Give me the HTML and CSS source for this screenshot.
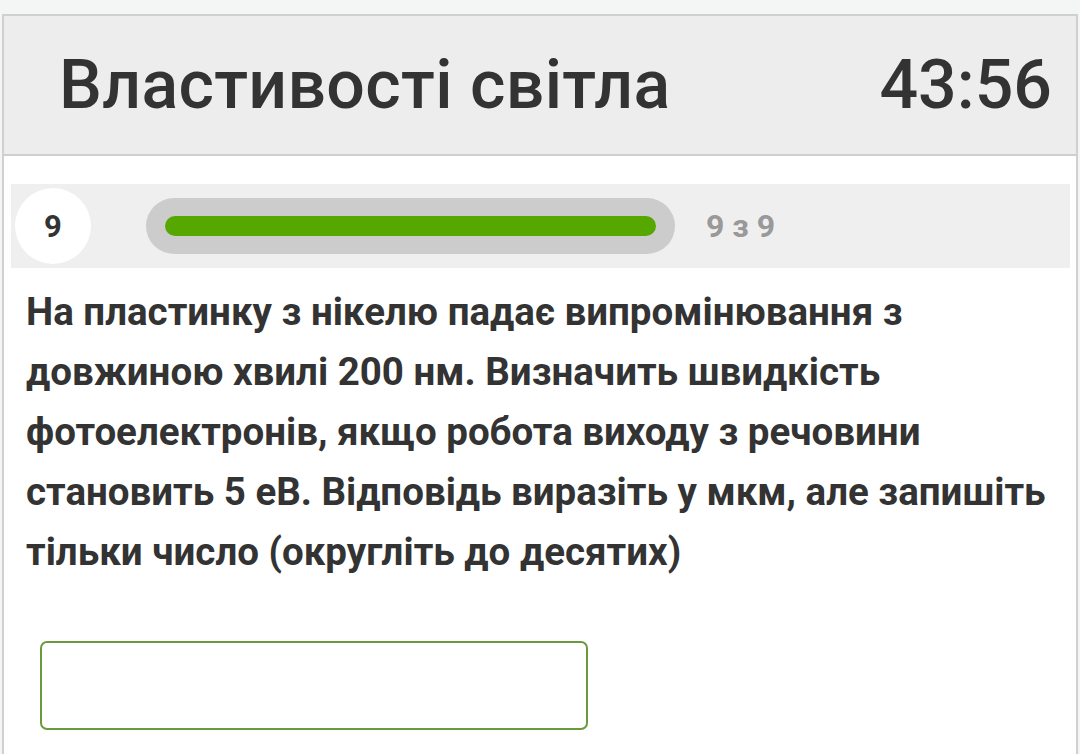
FILE: index.html
```html
<!DOCTYPE html>
<html lang="uk">
<head>
<meta charset="utf-8">
<link rel="stylesheet" href="styles.css">
</head>
<body>
<div class="page">
  <header class="header">
    <h1 class="title">Властивості світла</h1>
    <div class="timer">43:56</div>
  </header>
  <main class="content">
    <div class="progress-row">
      <div class="num">9</div>
      <div class="track"><div class="fill" style="width:100%"></div></div>
      <div class="count">9 з 9</div>
    </div>
    <p class="question">На пластинку з нікелю падає випромінювання з<br>довжиною хвилі 200 нм. Визначить швидкість<br>фотоелектронів, якщо робота виходу з речовини<br>становить 5 еВ. Відповідь виразіть у мкм, але запишіть<br>тільки число (округліть до десятих)</p>
    <input class="answer" type="text">
  </main>
</div>
</body>
</html>
```

FILE: styles.css
```css
html, body {
  margin: 0;
  padding: 0;
  background: #f4f6f6;
  font-family: Roboto, "Noto Sans", sans-serif;
  color: #333;
  overflow: hidden;
}
.page {
  margin: 14px 2px 0 2px;
  border: 2px solid #d0d0d0;
  border-bottom: none;
  background: #fff;
  height: 760px;
  box-sizing: border-box;
}
.header {
  background: #ededed;
  height: 140px;
  border-bottom: 2px solid #cfcfcf;
  display: flex;
  align-items: center;
  justify-content: space-between;
  padding: 0 24px 0 55px;
  box-sizing: border-box;
}
.title {
  margin: 0;
  font-size: 68px;
  font-weight: 500;
  color: #333;
  letter-spacing: 0.3px;
}
.timer {
  font-size: 68px;
  font-weight: 500;
  color: #333;
}
.content {
  padding: 28px 6px 0 7px;
}
.progress-row {
  background: #efefef;
  height: 84px;
  display: flex;
  align-items: center;
  padding-left: 4px;
}
.num {
  width: 76px;
  height: 76px;
  border-radius: 50%;
  background: #fff;
  display: flex;
  align-items: center;
  justify-content: center;
  font-size: 31px;
  font-weight: 700;
  color: #333;
}
.track {
  margin-left: 55px;
  width: 491px;
  height: 20px;
  padding: 18px 19px;
  background: #cccccc;
  border-radius: 28px;
}
.fill {
  height: 20px;
  border-radius: 10px;
  background: #56a800;
}
.count {
  margin-left: 31px;
  font-size: 32px;
  font-weight: 700;
  color: #999;
}
.question {
  margin: 14px 0 0 15px;
  font-size: 38.5px;
  font-weight: 700;
  line-height: 60px;
  color: #333;
  white-space: nowrap;
}
.answer {
  display: block;
  margin: 59px 0 0 29px;
  width: 548px;
  height: 89px;
  box-sizing: border-box;
  border: 2px solid #6b9a3c;
  border-radius: 7px;
  background: #fff;
  outline: none;
}
```
